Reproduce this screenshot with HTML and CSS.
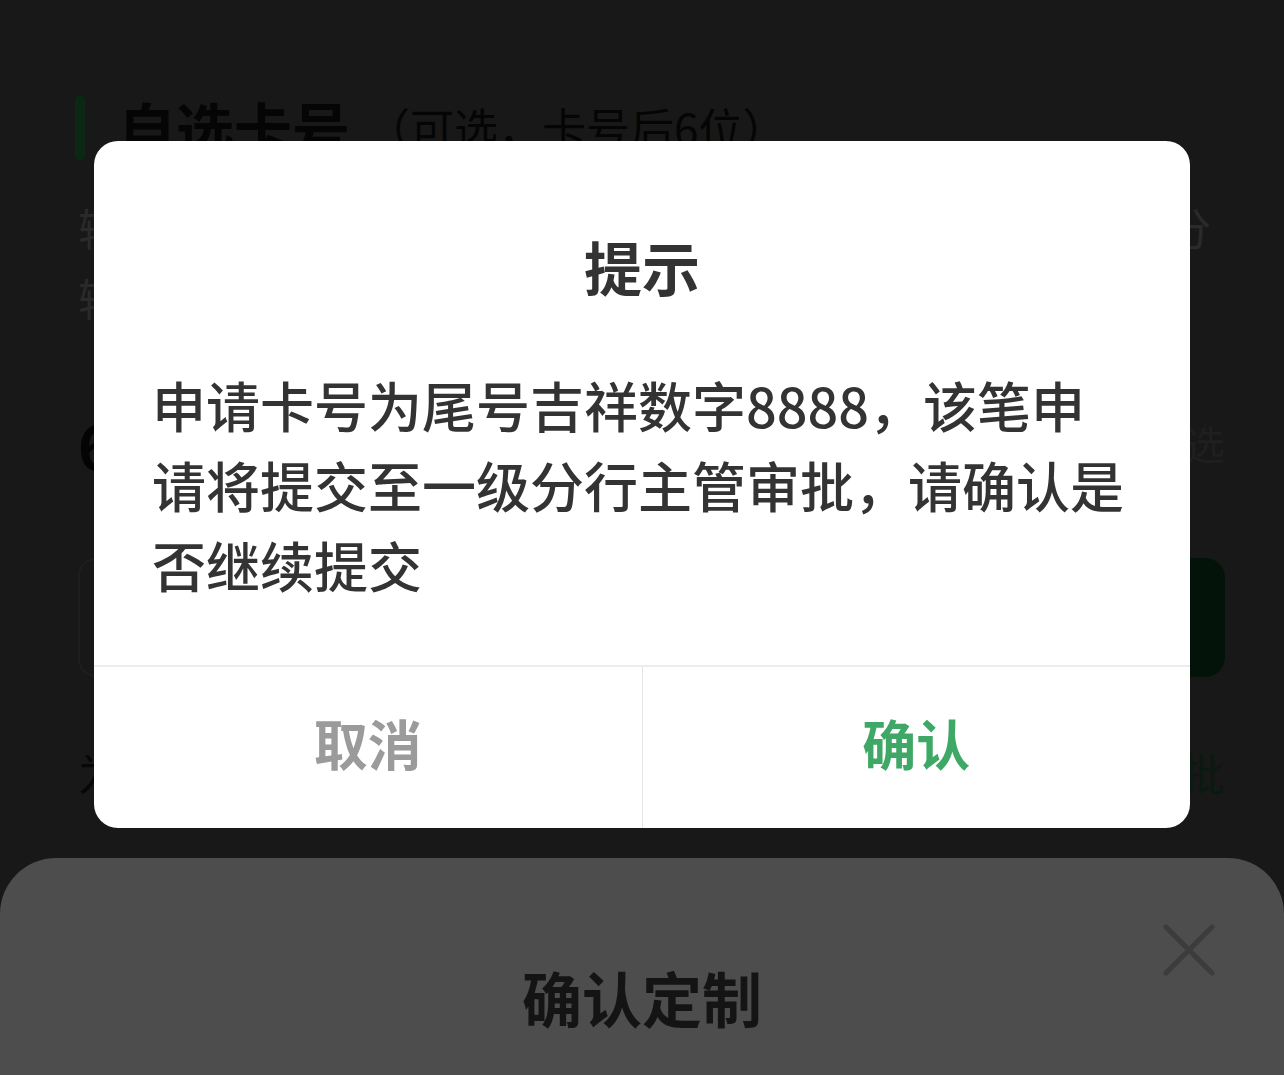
FILE: index.html
```html
<!DOCTYPE html>
<html lang="zh-CN">
<head>
<meta charset="utf-8" />
<title>自选卡号</title>
<link rel="stylesheet" href="styles.css">
</head>
<body>
<div class="page"><!--底层页面-->
  <h2 class="sec-title"><span class="bar"></span>自选卡号<small>（可选，卡号后6位）</small></h2>
  <p class="tip">
    <span class="tip-line full">输入卡号后六位数字，系统将查询该号码是否可选，部分</span>
    <span class="tip-line">输入号码需满足发卡规则</span>
  </p>
  <div class="num-row">
    <span class="num">6</span>
    <a class="reselect" href="#">重选</a>
  </div>
  <div class="query-row">
    <div class="input"></div>
    <button class="query">查询</button>
  </div>
  <div class="note">
    <span>为吉祥号码</span>
    <span class="note-r">需审批</span>
  </div>
</div>

<div class="sheet"><!--确认定制弹层-->
  <h3 class="sheet-title">确认定制</h3>
  <svg class="sheet-close" width="52" height="52" viewBox="0 0 52 52">
    <path d="M3 3 L49 49 M49 3 L3 49" stroke="#3c3c3c" stroke-width="5" stroke-linecap="round" fill="none"/>
  </svg>
</div>

<div class="mask"><!--提示框-->
  <div class="dialog">
    <h3 class="dlg-title">提示</h3>
    <p class="dlg-text">申请卡号为尾号吉祥数字8888，该笔申请将提交至一级分行主管审批，请确认是否继续提交</p>
    <div class="dlg-btns">
      <button class="btn cancel">取消</button>
      <button class="btn ok">确认</button>
    </div>
  </div>
</div>
</body>
</html>
```

FILE: styles.css
```css
html,body{margin:0;padding:0;}
body{width:1284px;height:1075px;overflow:hidden;background:#181818;font-family:"Noto Sans CJK SC","Noto Sans",sans-serif;position:relative;}
button{font-family:inherit;border:0;background:none;padding:0;cursor:pointer;}

/* 底层页面（已被遮罩压暗） */
.page{padding:95px 59px 0 75px;color:#050505;}
.sec-title{display:flex;align-items:center;height:65px;margin:0;font-size:58px;font-weight:bold;line-height:65px;}
.sec-title .bar{width:10px;height:65px;border-radius:5px;background:#0b2815;margin-right:33px;}
.sec-title small{font-size:44px;font-weight:normal;margin-left:16px;}
.tip{margin:32px 0 0 3px;font-size:44px;line-height:70px;color:#2a2a2a;}
.tip-line{display:block;}
.tip-line.full{text-align:justify;text-align-last:justify;margin-right:14px;}
.num-row{display:flex;justify-content:space-between;align-items:center;height:70px;margin:76px 0 0 3px;}
.num{font-size:60px;font-weight:bold;color:#040404;}
.reselect{font-size:40px;color:#1f1f1f;text-decoration:none;}
.query-row{display:flex;gap:24px;height:119px;margin:80px 0 0 3px;}
.query-row .input{flex:1;border:2px solid #1e1e1e;border-radius:18px;}
.query{width:280px;border-radius:20px;background:#03130a;color:#0c0c0c;font-size:44px;}
.note{display:flex;justify-content:space-between;align-items:center;height:60px;margin:65px 0 0 3px;font-size:44px;color:#070707;}
.note-r{color:#0b1a10;}

/* 底部弹层 */
.sheet{position:absolute;left:0;right:0;bottom:0;height:217px;background:#4d4d4d;border-radius:56px 56px 0 0;text-align:center;}
.sheet-title{margin:0;padding-top:107px;font-size:60px;line-height:64px;font-weight:bold;color:#141414;}
.sheet-close{position:absolute;top:66px;right:69px;}

/* 提示框 */
.mask{position:absolute;left:0;top:0;right:0;bottom:0;}
.dialog{position:absolute;left:94px;top:141px;width:1096px;height:687px;background:#fff;border-radius:24px;overflow:hidden;display:flex;flex-direction:column;}
.dlg-title{margin:0;padding-top:85px;font-size:58px;line-height:80px;font-weight:bold;color:#333;text-align:center;}
.dlg-text{flex:1;margin:59px 0 0;padding:0 58px;font-size:54px;line-height:80px;font-weight:500;color:#333;}
.dlg-btns{display:flex;height:161px;border-top:2px solid #ececec;}
.btn{flex:1;font-size:54px;font-weight:bold;line-height:151px;padding-bottom:10px;}
.btn.cancel{color:#9b9b9b;border-right:1px solid #e6e6e6;}
.btn.ok{color:#40a866;}
```
